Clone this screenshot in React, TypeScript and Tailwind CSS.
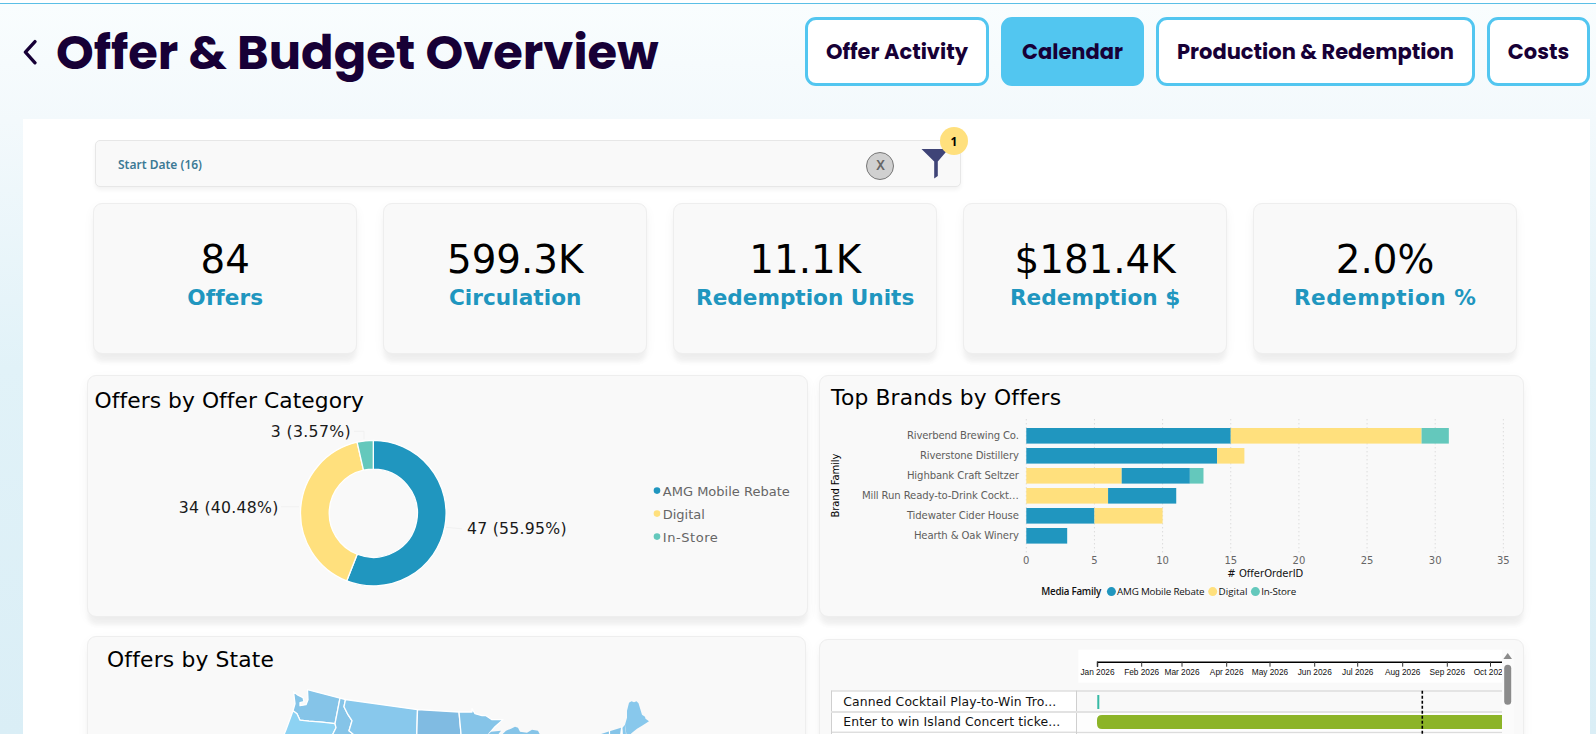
import React from "react";

const BLUE = "#2096bf";
const YELLOW = "#ffe07d";
const TEAL = "#64c8bc";

const tabs = [
  { label: "Offer Activity", active: false, width: "w-[184px]" },
  { label: "Calendar", active: true, width: "w-[143px]" },
  { label: "Production & Redemption", active: false, width: "w-[319px]" },
  { label: "Costs", active: false, width: "w-[103px]" },
];

const kpis = [
  { value: "84", label: "Offers", tracking: "tracking-[0.15px]" },
  { value: "599.3K", label: "Circulation", tracking: "tracking-[0.05px]" },
  { value: "11.1K", label: "Redemption Units", tracking: "tracking-[0px]" },
  { value: "$181.4K", label: "Redemption $", tracking: "tracking-[0.05px]" },
  { value: "2.0%", label: "Redemption %", tracking: "tracking-[0.5px]" },
];

const cardStyle =
  "rounded-[9px] border border-[#eeeeee] bg-[#f9f9f9] shadow-[0_9px_4px_-1px_rgba(0,0,0,0.045),0_4px_12px_rgba(0,0,0,0.045)]";

const VERDANA = "Verdana, 'DejaVu Sans', sans-serif";
const SEGOE = "'Segoe UI', 'Open Sans', sans-serif";

function Header() {
  return (
    <header className="flex h-[115px] shrink-0 items-start justify-between pl-[22px] pr-[6px] font-['Poppins','Inter',sans-serif] text-[#170036]">
      <div className="flex items-center pt-[14px]">
        <svg width="16" height="26" viewBox="0 0 16 26" className="mt-[-3px] shrink-0">
          <path d="M13 2.6 L3.4 13.2 L13 23.8" fill="none" stroke="#170036" strokeWidth="3.3" strokeLinecap="round" strokeLinejoin="round" />
        </svg>
        <h1 className="ml-[18px] whitespace-nowrap text-[48px] font-bold leading-[70px]">Offer &amp; Budget Overview</h1>
      </div>
      <nav className="flex gap-3 pt-[13px]">
        {tabs.map((t) => (
          <button
            key={t.label}
            className={`flex h-[69px] items-center justify-center whitespace-nowrap rounded-[11px] border-[3px] border-[#52c6f0] text-[21px] font-bold ${t.width} ${t.active ? "bg-[#52c6f0]" : "bg-white"}`}
          >
            {t.label}
          </button>
        ))}
      </nav>
    </header>
  );
}

function FilterBar() {
  return (
    <div className="relative ml-[72px] flex h-[47px] w-[866px] items-center rounded-[5px] border border-[#e7e7e7] bg-[#f9f9f9] pl-[22px] shadow-[0_3px_4px_rgba(0,0,0,0.05)]">
      <span className="pt-[3px] font-['Segoe_UI','Noto_Sans',sans-serif] text-[12px] font-semibold text-[#3c7a95]">Start Date (16)</span>
      <div className="ml-auto mr-[66px] mt-[4px] flex size-7 items-center justify-center rounded-full border border-[#777] bg-[#d0d0d0] pl-px font-['Segoe_UI','Noto_Sans',sans-serif] text-[13.5px] font-semibold text-[#666]">
        X
      </div>
      <svg className="absolute left-[825px] top-[7px]" width="28" height="32" viewBox="0 0 28 32">
        <path d="M0.5 0.9 H27.5 L16.8 13.4 V28 L13.2 30.5 V13.4 Z" fill="#3f4477" />
      </svg>
      <span className="absolute left-[844px] top-[-14px] flex size-7 items-center justify-center rounded-full bg-[#ffe07d] pt-px font-['Segoe_UI','Noto_Sans',sans-serif] text-[12px] font-bold text-black">
        1
      </span>
    </div>
  );
}

function Kpi({ value, label, tracking }: { value: string; label: string; tracking: string }) {
  return (
    <div className={`flex h-[151px] flex-col items-center pt-[32px] font-[Verdana,'DejaVu_Sans',sans-serif] ${cardStyle}`}>
      <div className="text-[38.8px] leading-[48px] text-black">{value}</div>
      <div className={`whitespace-nowrap text-[21.6px] font-bold leading-[28px] text-[#2096bf] ${tracking}`}>{label}</div>
    </div>
  );
}

const CX = 285.3;
const CY = 137.9;
function ring(start: number, end: number) {
  const R = 72.8;
  const r = 44.1;
  const p = (rad: number, f: number) => {
    const a = f * Math.PI * 2;
    return `${(CX + rad * Math.sin(a)).toFixed(2)} ${(CY - rad * Math.cos(a)).toFixed(2)}`;
  };
  const big = end - start > 0.5 ? 1 : 0;
  return `M${p(R, start)} A${R} ${R} 0 ${big} 1 ${p(R, end)} L${p(r, end)} A${r} ${r} 0 ${big} 0 ${p(r, start)} Z`;
}

function CategoryChart() {
  const slices = [
    { from: 0, to: 47 / 84, color: BLUE },
    { from: 47 / 84, to: 81 / 84, color: YELLOW },
    { from: 81 / 84, to: 1, color: TEAL },
  ];
  const labels = [
    { x: 182.7, y: 61.5, w: 80, t: "3 (3.57%)" },
    { x: 90.8, y: 137.5, w: 99.5, t: "34 (40.48%)" },
    { x: 379, y: 158.5, w: 99.5, t: "47 (55.95%)" },
  ];
  const legend = [
    { t: "AMG Mobile Rebate", c: BLUE, w: 127 },
    { t: "Digital", c: YELLOW, w: 42 },
    { t: "In-Store", c: TEAL, w: 55 },
  ];
  return (
    <section className={`h-[242px] w-[721px] ${cardStyle}`}>
      <svg width="719" height="240" viewBox="0 0.7 719 240" fontFamily={VERDANA}>
        <text x="6.5" y="32.8" fontSize="21.8" textLength="269.5" fill="#000">Offers by Offer Category</text>
        <path d="M266 56 H276 V64 M193 131.5 H211 M358 152 L374 153.5" fill="none" stroke="#f1f1f1" />
        {slices.map((s) => (
          <path key={s.color} d={ring(s.from, s.to)} fill={s.color} stroke="#fff" strokeWidth="1.3" />
        ))}
        {labels.map((l) => (
          <text key={l.t} x={l.x} y={l.y} fontSize="15.7" textLength={l.w} fill="#1a1a1a">{l.t}</text>
        ))}
        {legend.map((l, i) => (
          <g key={l.t}>
            <circle cx="569" cy={115.3 + i * 23} r="3.3" fill={l.c} />
            <text x="574.8" y={120.9 + i * 23} fontSize="13" textLength={l.w} fill="#666">{l.t}</text>
          </g>
        ))}
      </svg>
    </section>
  );
}

const brands: { name: string; w: number; bars: [string, number][] }[] = [
  { name: "Riverbend Brewing Co.", w: 112, bars: [[BLUE, 15], [YELLOW, 14], [TEAL, 2]] },
  { name: "Riverstone Distillery", w: 99, bars: [[BLUE, 14], [YELLOW, 2]] },
  { name: "Highbank Craft Seltzer", w: 112, bars: [[YELLOW, 7], [BLUE, 5], [TEAL, 1]] },
  { name: "Mill Run Ready-to-Drink Cockt…", w: 157, bars: [[YELLOW, 6], [BLUE, 5]] },
  { name: "Tidewater Cider House", w: 112, bars: [[BLUE, 5], [YELLOW, 5]] },
  { name: "Hearth & Oak Winery", w: 105, bars: [[BLUE, 3]] },
];

function BrandsChart() {
  const x0 = 206.7;
  const unit = 13.63;
  return (
    <section className={`h-[242px] w-[705px] ${cardStyle}`}>
      <svg width="703" height="240" viewBox="0.4 0.7 703 240" fontFamily={VERDANA}>
        <text x="11.5" y="29.6" fontSize="21.8" textLength="230" fill="#000">Top Brands by Offers</text>
        {[0, 5, 10, 15, 20, 25, 30, 35].map((v) => (
          <g key={v}>
            <line x1={x0 + v * unit} x2={x0 + v * unit} y1="44" y2="177" stroke="#cfcfcf" strokeDasharray="1 3" />
            <text x={x0 + v * unit} y="188.7" fontSize="10" textAnchor="middle" fill="#666">{v}</text>
          </g>
        ))}
        {brands.map((b, row) => {
          let sum = 0;
          const top = 52.7 + row * 20;
          return (
            <g key={b.name}>
              <text x={199.3 - b.w} y={top + 11} fontSize="10.1" textLength={b.w} fill="#605e5c">{b.name}</text>
              {b.bars.map(([c, n], i) => {
                const x = x0 + sum * unit;
                sum += n;
                return <rect key={i} x={x} y={top} width={n * unit} height="15.6" fill={c} />;
              })}
            </g>
          );
        })}
        <text x="407.7" y="202" fontSize="10" textLength="76" fill="#111">{"# OfferOrderID"}</text>
        <text transform="translate(19.7 142.3) rotate(-90)" fontSize="10" textLength="64" fill="#000">Brand Family</text>
        <g fontFamily={SEGOE} fontSize="9.8" fill="#111" transform="translate(0 219.6)">
          <text x="221.6" y="0" fontWeight="600" textLength="60">Media Family</text>
          <circle cx="291.8" cy="-3.3" r="4.5" fill={BLUE} />
          <text x="297.4" y="0" textLength="87.5">AMG Mobile Rebate</text>
          <circle cx="393.1" cy="-3.3" r="4.5" fill={YELLOW} />
          <text x="398.9" y="0" textLength="29">Digital</text>
          <circle cx="435.8" cy="-3.3" r="4.5" fill={TEAL} />
          <text x="441.6" y="0" textLength="35">In-Store</text>
        </g>
      </svg>
    </section>
  );
}

function StateMap() {
  return (
    <section className={`h-[242px] w-[719px] ${cardStyle}`}>
      <svg width="717" height="240" viewBox="88 637.3 717 240" fontFamily={VERDANA}>
        <text x="107" y="667" fontSize="21.8" textLength="167" fill="#000">Offers by State</text>
        <g stroke="#fff" strokeWidth="1.3" strokeLinejoin="round">
          <path d="M293.5 692 L298 695.5 L303 698 L304 702 L300 703 L300 706 L306 705 L308 700 L307.5 690 L340 698.5 L335 724 L322 722.5 L309 721.5 L300 720.5 L297 714 L293 711 L295 704 Z" fill="#85c4e8" />
          <path d="M293 711 L297 714 L300 720.5 L309 721.5 L322 722.5 L335 724 L336 728 L333 734 L331 745 H280 L286 730 Z" fill="#8dd2f3" />
          <path d="M340 698.5 L345.5 699.8 L344 707 L348 715 L352 721 L349 731 L355 736 V750 H330 L333 734 L336 728 L335 724 Z" fill="#85c4e8" />
          <path d="M345.5 699.8 L417.5 710 L416.5 745 H355 V736 L349 731 L352 721 L348 715 L344 707 Z" fill="#88c8ec" />
          <path d="M417.5 710 L459 712.3 L461 734 V745 H416.5 Z" fill="#80bbe2" />
          <path d="M459 712.3 H472 L472 709 L475 714 L482 716 L486 716 L492 720 L503 720 L495 727 L489 734 V745 H461 V734 Z" fill="#85c4e8" />
        </g>
        <g fill="#85c4e8">
          <path d="M488 735 L491 732 L501 731 L498 735 Z" />
          <path d="M502 735 L506 731 L511 729 L515 727 L518 728 L520 732 L527 733 L532 730 L538 731 L540 735 Z" />
          <path d="M599 735 L608 732 L621 728 L620 735 Z" />
        </g>
        <path d="M609.5 731 V735 M622 727 L621.5 735" stroke="#fff" strokeWidth="1.2" />
        <path d="M622.5 728 L625 725 L626 735 H623 Z" fill="#88c8ec" />
        <path d="M625 725 L627 718 L627 711 L629 703 L631.5 701.5 L634 702.5 L636.5 701.5 L638.5 703.5 L642 715 L645 717 L645.5 719 L649 721.5 L642 726 L637 729 L632 733 L630 735 L626.5 735 Z" fill="#88c8ec" />
      </svg>
    </section>
  );
}

const months: [string, number][] = [
  ["Jan 2026", 1097.5], ["Feb 2026", 1141.7], ["Mar 2026", 1182], ["Apr 2026", 1226.7], ["May 2026", 1270],
  ["Jun 2026", 1314.7], ["Jul 2026", 1357.7], ["Aug 2026", 1402.7], ["Sep 2026", 1447.3], ["Oct 2026", 1490.5],
];

function Timeline() {
  return (
    <section className={`mt-[3px] h-[242px] w-[705px] ${cardStyle}`}>
      <svg width="703" height="240" viewBox="820 640.3 703 240" fontFamily={VERDANA}>
        <defs>
          <clipPath id="axisArea"><rect x="1078" y="640" width="424" height="240" /></clipPath>
        </defs>
        <g clipPath="url(#axisArea)">
          <rect x="1078.3" y="650" width="430" height="33" fill="#fff" />
          <path d="M1097.5 667 V662.5 H1510" fill="none" stroke="#000" strokeWidth="1.4" />
          {months.map(([m, x]) => (
            <g key={m}>
              <line x1={x} x2={x} y1="662" y2="667" stroke="#333" />
              <text x={x} y="675" fontSize="8.3" fontFamily="Arial, 'Liberation Sans', sans-serif" textAnchor="middle" fill="#111">{m}</text>
            </g>
          ))}
        </g>
        <rect x="831" y="691" width="245.5" height="60" fill="#fff" />
        <path d="M831 691.3 H1502 M831 732.5 H1502 M831.5 691 V750 M1076.5 691 V750" fill="none" stroke="#cfcfcf" />
        <rect x="831" y="711.3" width="671" height="2" fill="#e2e2e2" />
        <rect x="1077" y="713.3" width="425" height="18.7" fill="#fdfdfd" />
        <text x="843.3" y="706.3" fontSize="12.4" textLength="213" fill="#111">Canned Cocktail Play-to-Win Tro...</text>
        <text x="843.3" y="726.3" fontSize="12.4" textLength="217" fill="#111">Enter to win Island Concert ticke...</text>
        <rect x="1097.3" y="695.3" width="2" height="14" fill="#37baa5" />
        <path d="M1102 715.3 H1502 V729.3 H1102 Q1097 729.3 1097 724 V720.3 Q1097 715.3 1102 715.3 Z" fill="#8cb427" />
        <line x1="1422.3" x2="1422.3" y1="691" y2="750" stroke="#000" strokeWidth="1.6" strokeDasharray="3 2" />
        <rect x="1502" y="650" width="12" height="100" fill="#fbfbfb" />
        <path d="M1507.7 653.3 L1512 659.3 H1503.4 Z" fill="#8b8b8b" />
        <rect x="1504.2" y="665" width="7" height="40" rx="3.5" fill="#8b8b8b" />
      </svg>
    </section>
  );
}

export default function App() {
  return (
    <div className="flex h-[734px] w-full flex-col overflow-hidden bg-white [font-variant-ligatures:none]">
      <div className="mt-[3px] flex flex-1 flex-col border-t border-[#5bbfe6] bg-[linear-gradient(to_bottom,#f9fdfe_0%,#f3f9fc_16%,#e1f2f8_50%,#daeef6_100%)]">
        <Header />
        <main className="ml-[23px] mr-[6px] h-[615px] overflow-hidden bg-white pt-[21px]">
          <FilterBar />
          <div className="ml-[70.4px] mt-4 grid w-[1423.6px] grid-cols-5 gap-[26.2px]">
            {kpis.map((k) => (
              <Kpi key={k.label} {...k} />
            ))}
          </div>
          <div className="ml-[64px] mt-[21px] flex gap-[11px]">
            <CategoryChart />
            <BrandsChart />
          </div>
          <div className="ml-[64px] mt-[19px] flex gap-[13px]">
            <StateMap />
            <Timeline />
          </div>
        </main>
      </div>
    </div>
  );
}
